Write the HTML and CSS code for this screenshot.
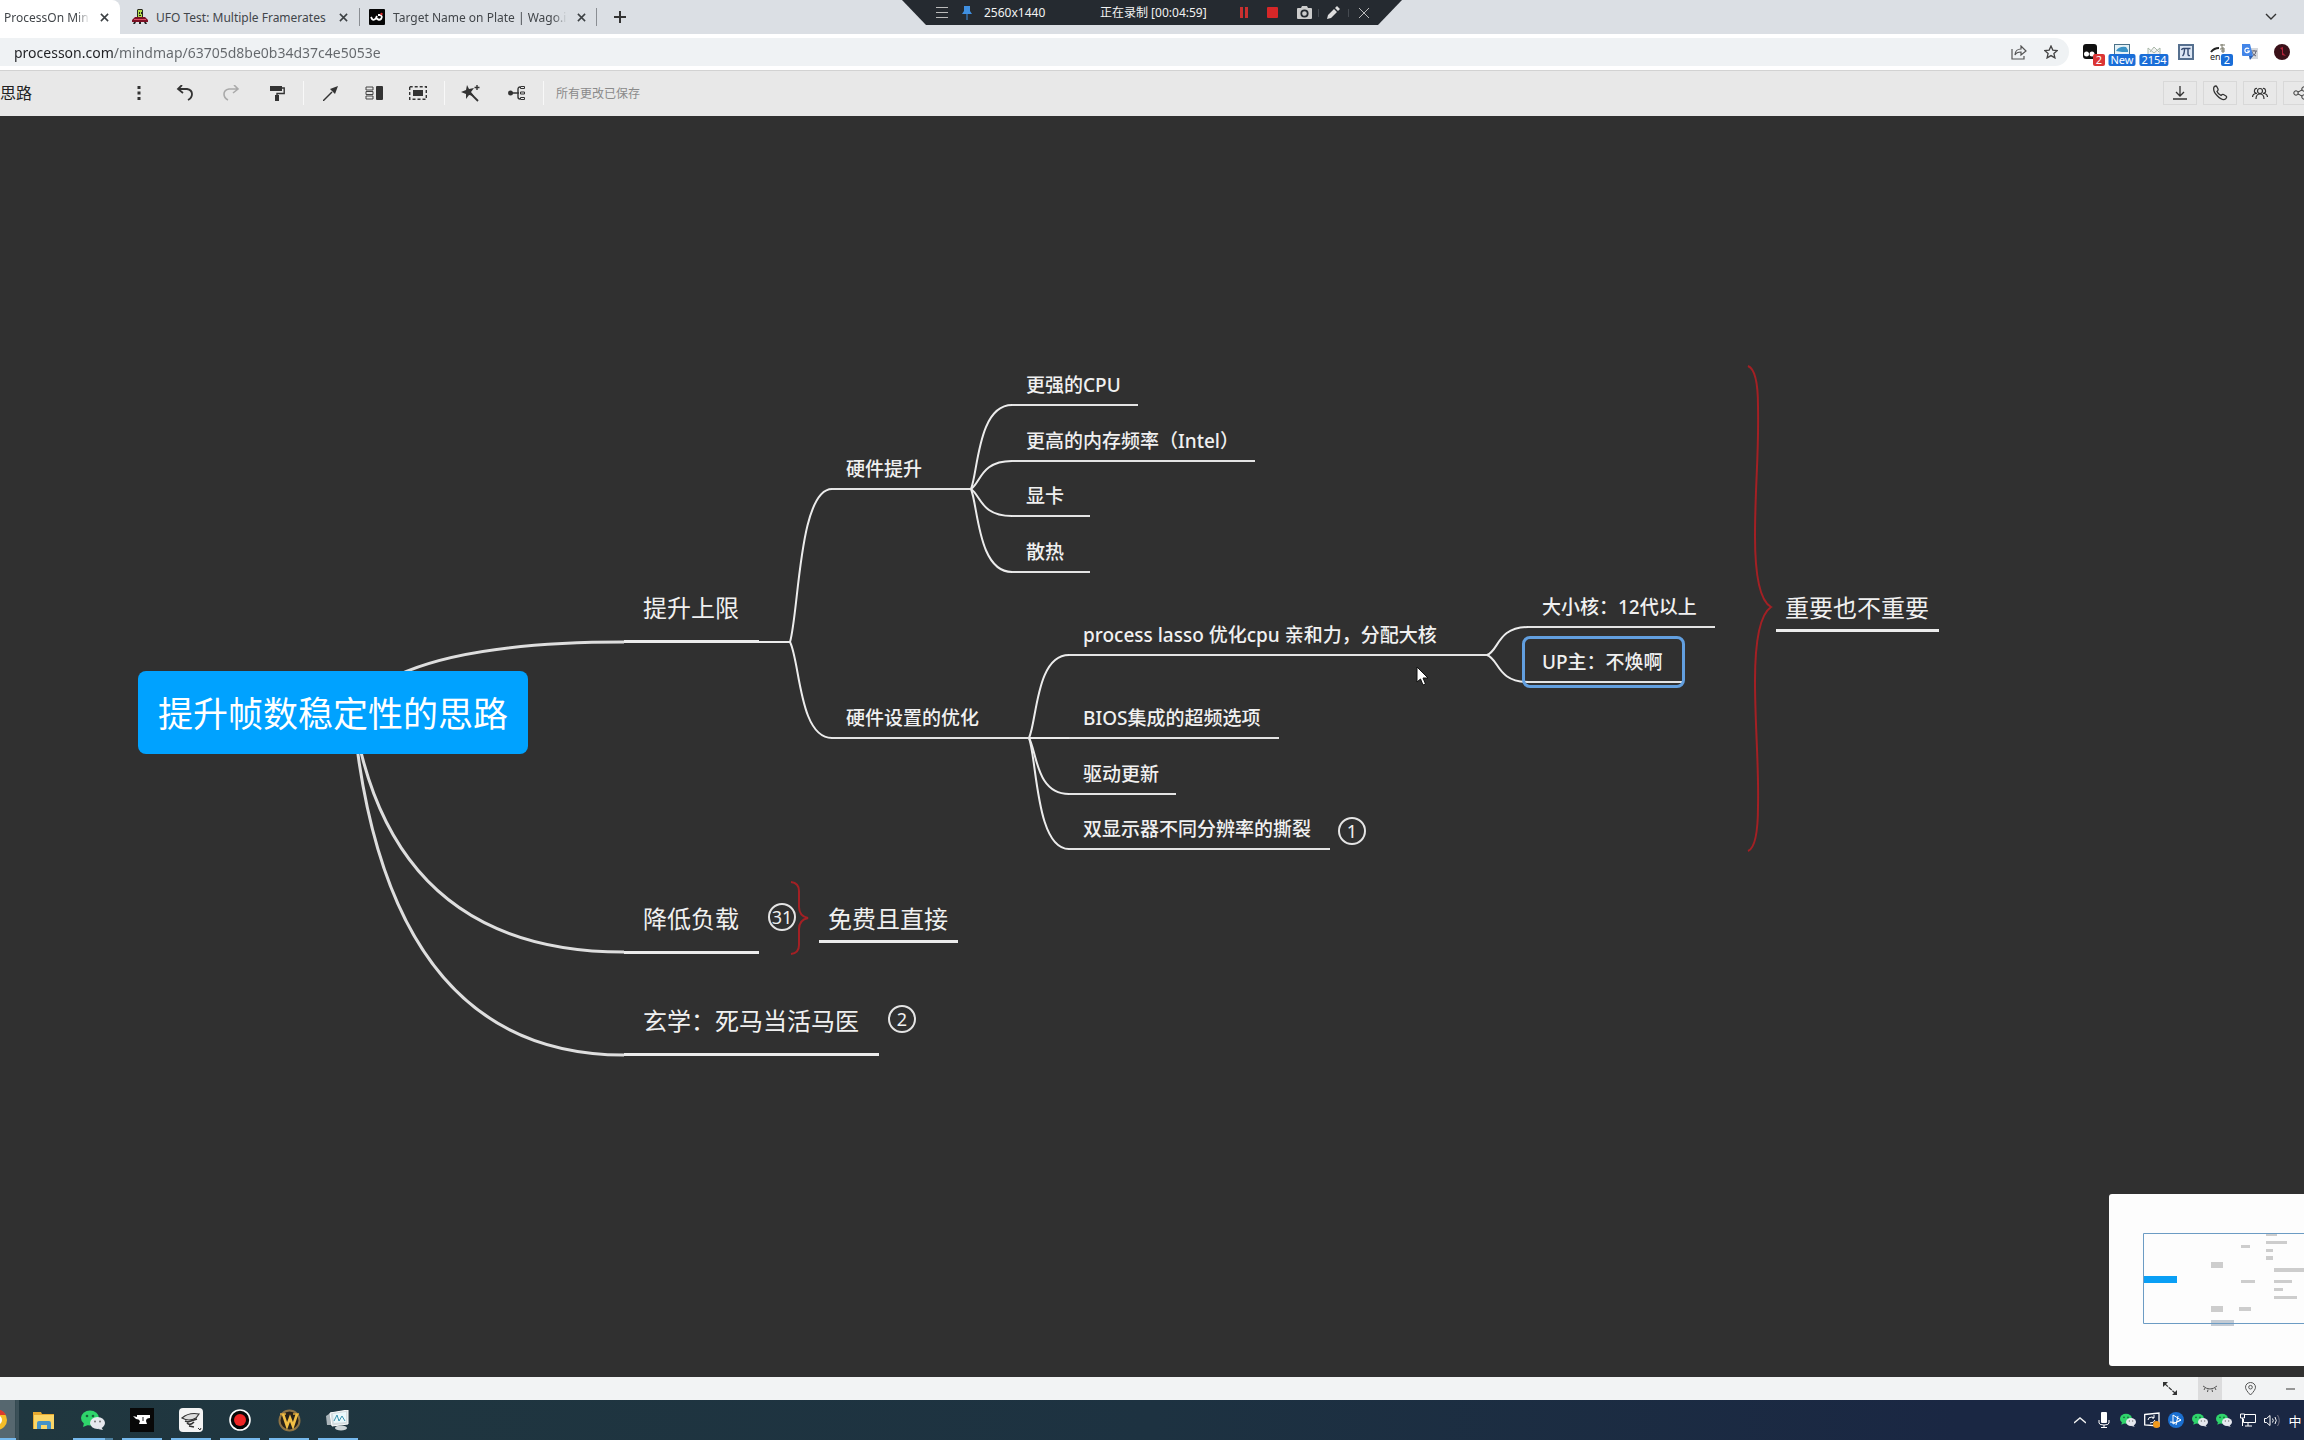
FILE: index.html
```html
<!DOCTYPE html>
<html lang="zh-CN">
<head>
<meta charset="utf-8">
<title>提升帧数稳定性的思路</title>
<link rel="stylesheet" href="styles.css">
</head>
<body>
<svg class="defs" aria-hidden="true">
  <symbol id="close" viewBox="0 0 10 10"><path d="M1 1l8 8M9 1l-8 8" fill="none" stroke="currentColor" stroke-width="1.7"/></symbol>
  <symbol id="wechat" viewBox="0 0 24 20"><ellipse cx="9" cy="8" rx="9" ry="7.5" fill="#2fd46b"/><path d="M3 13l-1 4 5-2z" fill="#2fd46b"/><circle cx="6" cy="6" r="1.3" fill="#17633a"/><circle cx="12" cy="6" r="1.3" fill="#17633a"/><ellipse cx="16.500" cy="13" rx="7.500" ry="6" fill="#e6e8ee"/><path d="M20 17l2 3-5-1z" fill="#e6e8ee"/><circle cx="14" cy="11.500" r="1" fill="#777"/><circle cx="19" cy="11.500" r="1" fill="#777"/></symbol>
</svg>

<header class="tabs">
  <div class="tab tab--active"><a class="tab__title tab__title--fade" href="#map">ProcessOn Min</a><button class="tab__close" aria-label="关闭"><svg width="9" height="9"><use href="#close"/></svg></button></div>
  <div class="tab"><svg class="tab__icon" width="16" height="16" viewBox="0 0 16 16"><path d="M5 1l1-1h4l1 1v8H5z" fill="#2a2a1a"/><path d="M6 1h4v7H6z" fill="#b4dc4a"/><path d="M7 3h1v2H7zM9 3h1v2H9zM7 6h2v1H7z" fill="#222"/><path d="M3 8h10l3 3v2H0v-2z" fill="#7d1024"/><path d="M2 10h12v1H2z" fill="#e0506a"/><path d="M2 13h2l-1 2H1zM7 13h2v2H7zM12 13h2l1 2h-2z" fill="#222"/></svg><a class="tab__title" href="#ufo">UFO Test: Multiple Framerates</a><button class="tab__close" aria-label="关闭"><svg width="9" height="9"><use href="#close"/></svg></button></div>
  <div class="tab tab--lined"><svg class="tab__icon" width="16" height="16" viewBox="0 0 16 16"><rect width="16" height="16" rx="1" fill="#050505"/><path d="M2 8l1 2q2 2 4-1l1-2-1 2q3 3 5 1 2-3-1-4H9" fill="none" stroke="#fff" stroke-width="1.800"/><circle cx="12.500" cy="5" r="1.200" fill="#d33"/></svg><a class="tab__title tab__title--fade" href="#wago">Target Name on Plate | Wago.i</a><button class="tab__close" aria-label="关闭"><svg width="9" height="9"><use href="#close"/></svg></button></div>
  <button class="tabs__new" aria-label="新标签页"><svg width="12" height="12"><path d="M6 0v12M0 6h12" stroke="#333" stroke-width="2"/></svg></button>
  <button class="tabs__more" aria-label="搜索标签页"><svg width="12" height="8"><path d="M1 1l5 5 5-5" fill="none" stroke="#333" stroke-width="1.400"/></svg></button>
</header>

<div class="recorder">
  <button class="recorder__menu" aria-label="菜单"><svg width="12" height="12"><path d="M0 .5h12M0 5.500h12M0 10.500h12" stroke="#bbb"/></svg></button>
  <button class="recorder__pin" aria-label="固定"><svg width="10" height="14"><path d="M2 0h6v5l2 3H0l2-3zM4.500 8h1v6h-1z" fill="#3f8fe0"/></svg></button>
  <span class="recorder__size">2560x1440</span>
  <span class="recorder__state">正在录制 [00:04:59]</span>
  <button class="recorder__act" aria-label="暂停"><svg width="8" height="11"><path d="M0 0h3v11H0zM5 0h3v11H5z" fill="#c9302f"/></svg></button>
  <button class="recorder__act" aria-label="停止"><svg width="11" height="11"><rect width="11" height="11" rx="1" fill="#d62728"/></svg></button>
  <button class="recorder__act recorder__act--shot" aria-label="截图"><svg width="15" height="13" viewBox="0 0 15 13"><path d="M1 2h3l1-2h5l1 2h3q1 0 1 1v9q0 1-1 1H1q-1 0-1-1V3q0-1 1-1z" fill="#ccc"/><circle cx="7.500" cy="7.500" r="3.200" fill="none" stroke="#252a30" stroke-width="1.800"/></svg></button>
  <button class="recorder__act recorder__act--lined" aria-label="画笔"><svg width="13" height="13" viewBox="0 0 13 13"><path d="M0 13l1-4 6-6 3 3-6 6zM8 2l2-2 3 3-2 2z" fill="#ddd"/></svg></button>
  <button class="recorder__act recorder__act--lined" aria-label="关闭录制"><svg width="10" height="10"><path d="M0 0l10 10M10 0L0 10" stroke="#bbb"/></svg></button>
</div>

<div class="address">
  <div class="address__field">
    <input class="address__input" type="text" aria-label="地址" value="processon.com/mindmap/63705d8be0b34d37c4e5053e">
    <button aria-label="分享"><svg width="16" height="15" viewBox="0 0 16 15"><path d="M1 4v10h12v-3M4 10c0-4 3-6 6-6V1l5 5-5 4V7c-3 0-5 1-6 3z" fill="none" stroke="#555" stroke-width="1.200"/></svg></button>
    <button aria-label="收藏"><svg width="14" height="14" viewBox="0 0 14 14"><path d="M7 1l1.800 4.100 4.400.4-3.300 3 1 4.400L7 10.600 3.100 12.900l1-4.400-3.300-3 4.400-.4z" fill="none" stroke="#444" stroke-width="1.300"/></svg></button>
  </div>
  <div class="extensions">
    <button aria-label="脚本"><svg width="16" height="16" viewBox="0 0 16 16"><rect x="1" width="14" height="15" rx="3" fill="#111"/><circle cx="4.500" cy="10" r="2.500" fill="#fff"/><circle cx="10" cy="10" r="2.500" fill="#fff"/></svg><span class="badge badge--side badge--red">2</span></button>
    <button aria-label="阅读"><svg width="16" height="16" viewBox="0 0 16 16"><rect x=".5" y=".5" width="15" height="14" fill="#e5f1f6" stroke="#4b7188"/><path d="M2 7q3-5 10-4l2 3v2H8z" fill="#3b93c6"/></svg><span class="badge">New</span></button>
    <button aria-label="邮件"><svg width="16" height="16" viewBox="0 0 16 16"><path d="M2 4l6 5 6-5v10H2zM4 8l4-5 5 5" fill="#f2f2f2" stroke="#a9b8a9"/></svg><span class="badge">2154</span></button>
    <button aria-label="公式"><svg width="16" height="16" viewBox="0 0 16 16"><rect x="1" y="1" width="14" height="14" fill="#dce6f4" stroke="#56708f" stroke-width="2"/><path d="M3.500 6q.5-1.500 2-1.500h7M6.500 5q0 5-2 7M10 5v5q0 2 2 1.500" fill="none" stroke="#344a70" stroke-width="1.400"/></svg></button>
    <button class="ext-lang" aria-label="翻译"><svg width="18" height="16" viewBox="0 0 18 16"><path d="M2 8q3-4 8-4" fill="none" stroke="#222" stroke-width="2"/><path d="M11 1h5M13 0v5M11 5h5M12 7h4M14 3v6" stroke="#776" fill="none"/></svg><span class="ext-lang__code">en</span><span class="badge badge--side">2</span></button>
    <button aria-label="谷歌翻译"><svg width="17" height="16" viewBox="0 0 17 16"><rect x="7" y="4" width="9" height="11" fill="#d5d8dc"/><path d="M9 7h6M12 6v1M10 12q4-1 4-5M10 8q1 3 4 4" stroke="#667" fill="none"/><path d="M0 0h8l3 12H1q-1 0-1-1z" fill="#4285e8"/><path d="M7 5a2.300 2.300 0 1 0 .4 2H5" fill="none" stroke="#fff" stroke-width="1.200"/><path d="M7 12h4l-3 4z" fill="#2b5fb4"/></svg></button>
    <button aria-label="账户"><svg width="16" height="16"><circle cx="8" cy="8" r="8" fill="#3a1119"/><path d="M6 4l3-1v6l3 3-4-1V6z" fill="#b2233a"/></svg></button>
  </div>
</div>

<nav class="toolbar">
  <h1 class="toolbar__title">思路</h1>
  <div class="tools">
    <button aria-label="更多"><svg width="4" height="14"><path d="M.5 0h3v3h-3zM.5 5.500h3v3h-3zM.5 11h3v3h-3z" fill="#333"/></svg></button>
    <button aria-label="撤销"><svg width="18" height="16" viewBox="0 0 18 16"><path d="M3 4h8q5 1 5 5 0 4-4 6M6 0L2 4l5 4" fill="none" stroke="#333" stroke-width="1.800"/></svg></button>
    <button aria-label="重做"><svg width="18" height="16" viewBox="0 0 18 16"><path d="M15 4H7Q2 5 2 9q0 4 4 6M12 0l4 4-5 4" fill="none" stroke="#aaa" stroke-width="1.600"/></svg></button>
    <button aria-label="格式刷"><svg width="15" height="16" viewBox="0 0 15 16"><path d="M0 1h12v5H0z" fill="#333"/><path d="M12 3h2.200v5.500H7V10" fill="none" stroke="#333" stroke-width="1.400"/><path d="M5 10h4v6H5z" fill="#333"/></svg></button>
  </div>
  <div class="tools tools--compact">
    <button aria-label="关联线"><svg width="15" height="15" viewBox="0 0 15 15"><path d="M0 15l9-9" stroke="#333" stroke-width="1.400"/><path d="M15 0l-3 8-5-5z" fill="#333"/></svg></button>
    <button aria-label="概要"><svg width="18" height="14" viewBox="0 0 18 14"><path d="M1 1h7v3H1zM1 5.500h7v3H1zM1 10h7v3H1z" fill="none" stroke="#444"/><rect x="11" width="7" height="14" rx="1" fill="#333"/></svg></button>
    <button aria-label="外框"><svg width="18" height="14" viewBox="0 0 18 14"><rect x=".7" y=".7" width="16.600" height="12.600" fill="none" stroke="#333" stroke-width="1.400" stroke-dasharray="3 2"/><rect x="4" y="4" width="10" height="6" fill="#333"/></svg></button>
  </div>
  <div class="tools">
    <button aria-label="美化"><svg width="20" height="18" viewBox="0 0 20 18"><path d="M6 1l2 4 5-1-3 4 3 4-5-1-3 4V10L0 8l5-2z" fill="#333"/><path d="M10 10l7 7" stroke="#333" stroke-width="1.800"/><path d="M16 1v5M13.500 3.500h5" stroke="#333" stroke-width="1.400"/></svg></button>
    <button aria-label="结构"><svg width="18" height="14" viewBox="0 0 18 14"><circle cx="2.500" cy="7" r="2.500" fill="#333"/><path d="M4 7h7M10 3.500q0-2.500 2-2.500M10 3v8q0 2 2 2" fill="none" stroke="#333" stroke-width="1.400"/><path d="M12.500.5h4v2h-4zM12.500 6h4v2h-4zM12.500 11.500h4v2h-4z" fill="none" stroke="#333"/></svg></button>
  </div>
  <span class="toolbar__saved">所有更改已保存</span>
  <div class="actions">
    <button aria-label="下载"><svg width="14" height="14"><path d="M7 0v9M3 6l4 4 4-4M0 13h14" fill="none" stroke="#333" stroke-width="1.300"/></svg></button>
    <button aria-label="语音"><svg width="16" height="16" viewBox="0 0 16 16"><path d="M2 2q2-2 3 0l1 2q.5 1-1 2.500 1 2.500 4 4 1.500-1.500 2.500-1l2.500 1.500q1.500 1-.5 3-3 2-8-3T2 2z" fill="none" stroke="#333" stroke-width="1.300"/></svg></button>
    <button aria-label="协作"><svg width="16" height="13" viewBox="0 0 16 13"><circle cx="8" cy="4" r="2.500" fill="none" stroke="#333" stroke-width="1.200"/><path d="M4 12q0-5 4-5t4 5M5 6.500Q2 6 2.500 3.500T5 1.500M11 6.500q3-.5 2.500-3T11 1.500M.5 10q0-3 3-3.500M15.500 10q0-3-3-3.500" fill="none" stroke="#333" stroke-width="1.200"/></svg></button>
    <button aria-label="分享"><svg width="14" height="14"><circle cx="3" cy="7" r="2.200" fill="none" stroke="#333"/><circle cx="11" cy="3" r="2.200" fill="none" stroke="#333"/><circle cx="11" cy="11" r="2.200" fill="none" stroke="#333"/><path d="M5 6l4-2M5 8l4 2" stroke="#333"/></svg></button>
  </div>
</nav>

<main class="map" id="map">
  <svg class="links" aria-hidden="true">
    <g class="links__main">
      <path d="M350 596Q399 526 624 526"/>
      <path d="M353 596Q390 836 624 836"/>
      <path d="M353 596Q385 939 624 939"/>
    </g>
    <g class="links__sub">
      <path d="M759 526H790C799 495 799 373 832 373"/>
      <path d="M790 526C800 545 799 622 832 622"/>
      <path d="M971 373C978 356 978 289 1012 289"/>
      <path d="M971 373C981 366 981 345 1012 345"/>
      <path d="M971 373C981 380 981 400 1012 400"/>
      <path d="M971 373C978 390 978 456 1012 456"/>
      <path d="M1029 622C1037 605 1036 539 1069 539"/>
      <path d="M1029 622H1069"/>
      <path d="M1029 622C1037 636 1036 678 1069 678"/>
      <path d="M1029 622C1037 644 1036 733 1069 733"/>
      <path d="M1487 539C1499 535 1497 511 1528 511"/>
      <path d="M1487 539C1499 543 1497 566 1528 566"/>
    </g>
    <g class="links__brace">
      <path d="M1748 250Q1758 254 1758 290C1759 340 1755 370 1755 420Q1755 482 1771 491Q1755 502 1755 565C1755 610 1759 650 1758 690Q1758 731 1748 735"/>
      <path d="M791 766Q799 767 799 775V791Q799 800 808 802Q799 804 799 813V829Q799 837 791 838"/>
    </g>
  </svg>

  <div class="root">提升帧数稳定性的思路</div>
  <div class="branch n-limit">提升上限</div>
  <div class="branch n-load">降低负载</div>
  <div class="branch n-magic">玄学：死马当活马医</div>
  <div class="topic n-hw">硬件提升</div>
  <div class="topic n-cpu">更强的CPU</div>
  <div class="topic n-ram">更高的内存频率（Intel）</div>
  <div class="topic n-gpu">显卡</div>
  <div class="topic n-cool">散热</div>
  <div class="topic n-tune">硬件设置的优化</div>
  <div class="topic n-lasso">process lasso 优化cpu 亲和力，分配大核</div>
  <div class="topic n-bios">BIOS集成的超频选项</div>
  <div class="topic n-driver">驱动更新</div>
  <div class="topic n-tear">双显示器不同分辨率的撕裂</div>
  <div class="topic n-core">大小核：12代以上</div>
  <div class="topic n-up">UP主：不焕啊</div>
  <div class="selection"></div>
  <div class="summary n-important">重要也不重要</div>
  <div class="summary n-free">免费且直接</div>
  <button class="count c-tear">1</button>
  <button class="count c-load">31</button>
  <button class="count c-magic">2</button>

  <svg class="cursor" width="13" height="20" viewBox="0 0 13 20"><path d="M1 1v15l3.500-3 2.500 6 2.500-1L7 12h5z" fill="#fff" stroke="#111"/></svg>

  <aside class="minimap" aria-label="导航">
    <svg width="195" height="172">
      <g fill="#cdcdcd"><path d="M157 40h11v2h-11zM157 47h21v3h-21zM157 55h7v3h-7zM157 62h7v4h-7zM132 51h9v3h-9zM102 68h12v6h-12zM165 74h30v4h-30zM132 86h14v3h-14zM165 86h18v3h-18zM165 94h9v3h-9zM165 102h23v3h-23zM102 112h12v6h-12zM130 113h12v4h-12z"/><path d="M102 126h23v6h-23z" fill="#c3cbd4"/></g>
      <path d="M35 82h33v7H35z" fill="#0a9ff5"/>
      <path d="M196 39.500H34.500v90H196" fill="none" stroke="#6c9cc4"/>
    </svg>
  </aside>
</main>

<div class="status">
  <button aria-label="适应画布"><svg width="14" height="13" viewBox="0 0 14 13"><path d="M2 2l10 9" stroke="#333" stroke-width="1.200" stroke-dasharray="4 1"/><path d="M0 0h5L0 5zM14 13H9l5-5z" fill="#333"/></svg></button>
  <button class="is-on" aria-label="隐藏导航"><svg width="14" height="8"><path d="M0 1q7 6 14 0M2 3L1 5M5 4.500L4.500 7M9 4.500L9.500 7M12 3l1 2" fill="none" stroke="#555"/></svg></button>
  <button aria-label="定位"><svg width="11" height="14" viewBox="0 0 11 14"><path d="M5.500 13Q.5 8 .5 5.200a5 4.700 0 0 1 10 0Q10.500 8 5.500 13z" fill="none" stroke="#555"/><circle cx="5.500" cy="5.200" r="1.800" fill="none" stroke="#555"/></svg></button>
  <button aria-label="缩小"><svg width="9" height="2"><path d="M0 1h9" stroke="#777" stroke-width="1.500"/></svg></button>
</div>

<footer class="taskbar">
  <button class="task task--chrome" aria-label="Chrome"><svg width="20" height="20" viewBox="0 0 20 20"><circle cx="10" cy="10" r="10" fill="#f4bd28"/><path d="M1 5a10 10 0 0 1 18 0z" fill="#db3a2c"/><circle cx="10" cy="10" r="5" fill="#fff"/></svg></button>
  <button class="task" aria-label="文件资源管理器"><svg width="22" height="19" viewBox="0 0 22 19"><path d="M0 1h8l1 2h12v15H0z" fill="#e7a92f"/><path d="M1 4h20v14H1z" fill="#fbd667"/><path d="M4 18v-6q0-2 2-2h10q2 0 2 2v6h-4v-4H8v4z" fill="#4592c8"/></svg></button>
  <button class="task task--open task--stack" aria-label="微信"><svg width="24" height="20"><use href="#wechat"/></svg></button>
  <button class="task task--open" aria-label="铁砧"><svg width="24" height="24" viewBox="0 0 24 24"><rect width="24" height="24" fill="#080808"/><path d="M3 8l4 1V7h13v3q-4 0-4 3l1 3H9l1-3q-1-2-4-2z" fill="#fff"/><path d="M13 9v4" stroke="#222"/></svg></button>
  <button class="task task--open" aria-label="工具"><svg width="24" height="24" viewBox="0 0 24 24"><rect width="24" height="24" rx="4" fill="#f3f3f3"/><path d="M3 10q7-6 17-4l-3 4q-7 4-14 0z" fill="#ddd" stroke="#333" stroke-width="1.200"/><path d="M6 13l3 1 9-3M8 15q3 3 7-1M10 18l5 1" fill="none" stroke="#333" stroke-width="1.600"/><path d="M19 20l2 2 1-2" fill="none" stroke="#333"/></svg></button>
  <button class="task task--open" aria-label="录屏"><svg width="22" height="22" viewBox="0 0 22 22"><circle cx="11" cy="11" r="10" fill="#080808" stroke="#fff" stroke-width="1.600"/><circle cx="11" cy="11" r="6" fill="#ee2424"/></svg></button>
  <button class="task task--open" aria-label="魔兽世界"><svg width="23" height="23" viewBox="0 0 23 23"><circle cx="11.500" cy="11.500" r="10" fill="#27211a" stroke="#8d7345" stroke-width="2"/><path d="M2 5h6M15 5h6" stroke="#e0a93c" stroke-width="1.500"/><path d="M5 5l4 12 3-8 3 8 4-12" fill="none" stroke="#f2bf45" stroke-width="2.600"/></svg></button>
  <button class="task task--open" aria-label="资源监视器"><svg width="24" height="21" viewBox="0 0 24 21"><path d="M0 6l6-4v13H1z" fill="#aab4b9"/><path d="M4 3l18-3v14L6 16z" fill="#d5dde0" stroke="#fff"/><path d="M7 4l13-2v10L8 13z" fill="#eaf8fb"/><path d="M8 11l3-6 2 6 3-5 3 5" fill="none" stroke="#3a91ad"/><ellipse cx="15" cy="18" rx="6" ry="2.500" fill="#ccd4d7"/></svg></button>
  <div class="tray">
    <button aria-label="展开"><svg width="12" height="7"><path d="M0 6l6-5 6 5" fill="none" stroke="#eee" stroke-width="1.400"/></svg></button>
    <button aria-label="麦克风"><svg width="12" height="16" viewBox="0 0 12 16"><rect x="3" width="6" height="11" rx="1" fill="#fff"/><path d="M1 8v3q0 2 5 2t5-2V8M6 13v2M3 15.500h6" fill="none" stroke="#fff"/></svg></button>
    <button aria-label="微信"><svg width="16" height="14"><use href="#wechat"/></svg></button>
    <button aria-label="更新"><svg width="16" height="16" viewBox="0 0 16 16"><path d="M.7 2.500L15 1v13L.7 13z" fill="none" stroke="#fff" stroke-width="1.300"/><path d="M4 8q0-3 4-3l2 1M10 3v3H8M11 8q-1 3-5 3" fill="none" stroke="#fff"/><circle cx="12.500" cy="12.500" r="3.500" fill="#f29a1d"/></svg></button>
    <button aria-label="加速"><svg width="16" height="16" viewBox="0 0 16 16"><circle cx="8" cy="8" r="8" fill="#1b6fd0"/><path d="M5 3l8 5-8 4zM2 10q6 2 11-2M8 13l2-9" fill="none" stroke="#fff"/></svg></button>
    <button aria-label="微信"><svg width="16" height="14"><use href="#wechat"/></svg></button>
    <button aria-label="微信"><svg width="16" height="14"><use href="#wechat"/></svg></button>
    <button aria-label="网络"><svg width="16" height="14" viewBox="0 0 16 14"><path d="M5 1.500h10.500v8H3.500V6M8 9.500V13M5 13h7M.5 1h4v4h-4zM2.500 5v8" fill="none" stroke="#fff"/></svg></button>
    <button aria-label="音量"><svg width="16" height="13" viewBox="0 0 16 13"><path d="M.5 4.500h2L6 1.500v10L2.500 8.500h-2z" fill="none" stroke="#fff"/><path d="M8.500 4.500q1.500 2 0 4M11 3q2.500 3.500 0 7" fill="none" stroke="#fff"/><path d="M13.500 1q3.500 5.500 0 11" fill="none" stroke="#778"/></svg></button>
    <button class="tray__ime" aria-label="输入法">中</button>
  </div>
</footer>
</body>
</html>
```
FILE: styles.css
```css
* { box-sizing: border-box; }

body {
  margin: 0;
  min-height: 100vh;
  display: flex;
  flex-direction: column;
  overflow: hidden;
  position: relative;
  font-family: "Noto Sans", "Noto Sans CJK SC", sans-serif;
  font-size: 12px;
  color: #333;
}

button {
  display: flex;
  align-items: center;
  justify-content: center;
  padding: 0;
  border: 0;
  background: none;
  font: inherit;
  color: inherit;
  flex: none;
}

a { color: inherit; text-decoration: none; }
.defs { position: absolute; width: 0; height: 0; }

/* Browser tabs */
.tabs {
  display: flex;
  align-items: center;
  height: 34px;
  background: #dbdfe4;
}
.tab {
  display: flex;
  align-items: center;
  width: 239px;
  height: 34px;
  padding: 0 10px 0 12px;
  color: #42464a;
}
.tab--active {
  width: 120px;
  padding-left: 4px;
  background: #fff;
  border-radius: 0 8px 0 0;
}
.tab--lined { padding-left: 10px; width: 238px; position: relative; }
.tab--lined::before,
.tab--lined::after {
  content: "";
  position: absolute;
  left: 0;
  top: 8px;
  width: 1px;
  height: 18px;
  background: #8a8e93;
}
.tab--lined::after { left: auto; right: 0; }
.tab__icon { flex: none; margin-right: 8px; }
.tab__title { flex: 1; overflow: hidden; white-space: nowrap; }
.tab__title--fade {
  -webkit-mask-image: linear-gradient(to left, transparent, #000 14px);
  mask-image: linear-gradient(to left, transparent, #000 14px);
}
.tab__close { width: 12px; height: 16px; margin-left: 8px; color: #3c4043; }
.tabs__new { width: 28px; height: 28px; margin-left: 9px; }
.tabs__more { width: 28px; height: 28px; margin-left: auto; margin-right: 19px; }

/* Screen recorder strip */
.recorder {
  position: absolute;
  top: 0;
  left: calc(50% - 250px);
  width: 500px;
  height: 25px;
  padding-left: 34px;
  display: flex;
  align-items: center;
  background: #252a30;
  color: #f2f2f2;
  line-height: 24px;
  clip-path: polygon(0 0, 100% 0, 476px 100%, 24px 100%);
}
.recorder__menu { width: 12px; margin-right: 14px; }
.recorder__pin { width: 10px; margin-right: 12px; }
.recorder__size { width: 116px; }
.recorder__state { width: 130px; white-space: nowrap; }
.recorder__act { width: 28px; height: 8px; }
.recorder__act--shot { margin-left: 4px; }
.recorder__act--lined { width: 30px; border-left: 1px solid #454a50; }

/* Address row */
.address {
  display: flex;
  align-items: center;
  height: 36px;
  background: #fff;
}
.address__field {
  flex: 1;
  display: flex;
  align-items: center;
  height: 28px;
  margin-right: 5px;
  padding-right: 2px;
  border-radius: 0 14px 14px 0;
  background: #eff2f4;
}
.address__field button { width: 32px; }
.address__input {
  flex: 1;
  height: 28px;
  padding: 0 0 0 14px;
  border: 0;
  font: 14px "Noto Sans", sans-serif;
  color: transparent;
  background: linear-gradient(to right, #202124 114px, #63676b 114px);
  -webkit-background-clip: text;
  background-clip: text;
}
.extensions { display: flex; padding-right: 6px; }
.extensions button { position: relative; width: 32px; height: 28px; }
.badge {
  position: absolute;
  left: 50%;
  bottom: 0;
  transform: translateX(-50%);
  padding: 0 2px;
  border-radius: 2px;
  background: #1a6ed8;
  color: #fff;
  font-size: 11px;
  line-height: 12px;
}
.badge--side { left: auto; right: 1px; transform: none; padding: 0 3px; }
.badge--red { background: #db3535; }
.ext-lang__code {
  position: absolute;
  left: 8px;
  bottom: 3px;
  color: #222;
  font-size: 9px;
  line-height: 12px;
}

/* Editor toolbar */
.toolbar {
  display: flex;
  align-items: center;
  height: 46px;
  padding-bottom: 1px;
  border-top: 1px solid #d2d2d2;
  background: #e8e8e8;
  overflow: hidden;
}
.toolbar__title { width: 125px; margin: 0; font-size: 16px; font-weight: 400; line-height: 24px; color: #222; }
.tools { display: flex; gap: 18px; padding-right: 12px; border-right: 1px solid #f8f8f8; margin-right: 12px; }
.tools--compact { gap: 16px; }
.tools button { width: 28px; height: 24px; }
.toolbar__saved { color: #8a8a8a; white-space: nowrap; }
.actions { display: flex; gap: 6px; width: 141px; margin-left: auto; overflow: hidden; }
.actions button { width: 34px; height: 24px; border: 1px solid #d8d8d8; }

/* Mind map */
.map {
  position: relative;
  flex: 1;
  background: #303030;
  overflow: hidden;
  color: #f0f0f0;
}
.links { position: absolute; inset: 0; width: 100%; height: 100%; fill: none; }
.links__main { stroke: #dedede; stroke-width: 3; }
.links__sub { stroke: #ececec; stroke-width: 2; }
.links__brace { stroke: #a32024; stroke-width: 2; }

.root, .branch, .topic, .summary, .count, .selection { position: absolute; white-space: nowrap; }
.root {
  left: 138px;
  top: 555px;
  width: 390px;
  padding-top: 3px;
  border-radius: 8px;
  background: #00a2ff;
  color: #fff;
  font-size: 35px;
  line-height: 80px;
  text-align: center;
}
.branch {
  width: 135px;
  padding: 0 0 14px 19px;
  border-bottom: 3px solid #ececec;
  font-size: 24px;
  line-height: 36px;
}
.topic {
  padding: 1px 0 5px 14px;
  border-bottom: 2px solid #e4e4e4;
  font-size: 19px;
  font-weight: 500;
  line-height: 28px;
}
.summary {
  padding: 0 0 3px 9px;
  border-bottom: 3px solid #ececec;
  font-size: 24px;
  line-height: 36px;
}
.n-limit { left: 624px; top: 474px; }
.n-load { left: 624px; top: 785px; }
.n-magic { left: 624px; top: 887px; width: 255px; }
.n-hw { left: 832px; top: 338px; width: 139px; }
.n-cpu { left: 1012px; top: 254px; width: 126px; }
.n-ram { left: 1012px; top: 310px; width: 243px; }
.n-gpu { left: 1012px; top: 365px; width: 78px; }
.n-cool { left: 1012px; top: 421px; width: 78px; }
.n-tune { left: 832px; top: 587px; width: 197px; }
.n-lasso { left: 1069px; top: 504px; width: 418px; }
.n-bios { left: 1069px; top: 587px; width: 210px; }
.n-driver { left: 1069px; top: 643px; width: 107px; }
.n-tear { left: 1069px; top: 698px; width: 261px; }
.n-core { left: 1528px; top: 476px; width: 187px; }
.n-up { left: 1528px; top: 531px; width: 154px; }
.n-important { left: 1776px; top: 474px; width: 163px; }
.n-free { left: 819px; top: 785px; width: 139px; }
.selection {
  left: 1522px;
  top: 520px;
  width: 163px;
  height: 52px;
  border: 3px solid #629fdf;
  border-radius: 8px;
}
.count {
  width: 28px;
  height: 28px;
  border: 2px solid #e4e4e4;
  border-radius: 50%;
  font-size: 18px;
  line-height: 24px;
}
.c-tear { left: 1338px; top: 701px; }
.c-load { left: 768px; top: 787px; }
.c-magic { left: 888px; top: 889px; }
.cursor { position: absolute; left: 1416px; top: 550px; }
.minimap {
  position: absolute;
  right: 0;
  bottom: 11px;
  width: 195px;
  height: 172px;
  border-radius: 3px 0 0 3px;
  background: #fdfdfd;
}

/* Status row */
.status {
  display: flex;
  justify-content: flex-end;
  gap: 16px;
  height: 23px;
  padding-right: 2px;
  background: #f2f3f4;
}
.status button { width: 24px; }
.is-on { background: #dcdcdd; }

/* Windows taskbar */
.taskbar {
  display: flex;
  gap: 1px;
  height: 40px;
  background: linear-gradient(to right, #20373f, #1d3241 50%, #1a2743 85%);
  overflow: hidden;
}
.task { position: relative; width: 48px; height: 40px; }
.task--chrome {
  width: 19px;
  justify-content: flex-end;
  padding-right: 12px;
  background: linear-gradient(to right, #56676f 15px, #2e444c 15px, #3b5058 16px);
  overflow: hidden;
}
.task--chrome svg { flex: none; }
.task--open::after,
.task--chrome::after {
  content: "";
  position: absolute;
  left: 4px;
  right: 4px;
  bottom: 0;
  height: 2px;
  background: #76b9ed;
}
.task--chrome::after { left: 0; right: 3px; }
.task--stack::after { background: linear-gradient(to right, #76b9ed 32px, #4c7f9f 32px); }
.tray { display: flex; width: 236px; margin-left: auto; overflow: hidden; }
.tray button { width: 24px; height: 40px; color: #fff; }
.tray .tray__ime { width: 20px; padding-left: 2px; font-size: 13px; }
```
